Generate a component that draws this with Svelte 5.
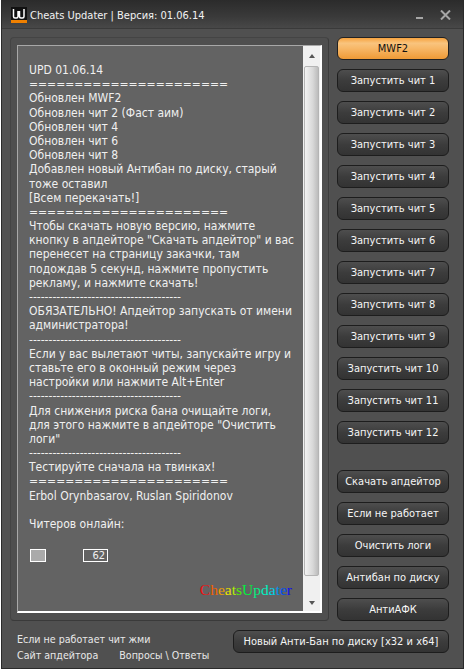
<script lang="ts">
  const eq = "======================";
  const dash = "---------------------------------------";
  const lines = [
    "UPD 01.06.14",
    eq,
    "Обновлен MWF2",
    "Обновлен чит 2 (Фаст аим)",
    "Обновлен чит 4",
    "Обновлен чит 6",
    "Обновлен чит 8",
    "Добавлен новый Антибан по диску, старый",
    "тоже оставил",
    "[Всем перекачать!]",
    eq,
    "Чтобы скачать новую версию, нажмите",
    "кнопку в апдейторе \"Скачать апдейтор\" и вас",
    "перенесет на страницу закачки, там",
    "подождав 5 секунд, нажмите пропустить",
    "рекламу, и нажмите скачать!",
    dash,
    "ОБЯЗАТЕЛЬНО! Апдейтор запускать от имени",
    "администратора!",
    dash,
    "Если у вас вылетают читы, запускайте игру и",
    "ставьте его в оконный режим через",
    "настройки или нажмите Alt+Enter",
    dash,
    "Для снижения риска бана очищайте логи,",
    "для этого нажмите в апдейторе \"Очистить",
    "логи\"",
    dash,
    "Тестируйте сначала на твинках!",
    eq,
    "Erbol Orynbasarov, Ruslan Spiridonov",
    "",
    "Читеров онлайн:",
  ];
  const cheats = ["MWF2", ...Array.from({ length: 12 }, (_, i) => `Запустить чит ${i + 1}`)];
  const tools = ["Скачать апдейтор", "Если не работает", "Очистить логи", "Антибан по диску", "АнтиАФК"];
  const brand = [
    ["C", "#f01010"], ["h", "#f06000"], ["e", "#f0a000"], ["a", "#e8e000"], ["t", "#b0f000"], ["s", "#50f000"],
    ["U", "#00f040"], ["p", "#00f080"], ["d", "#00f0c0"], ["a", "#00d0e8"], ["t", "#0090f0"], ["e", "#0050f0"], ["r", "#1010f0"],
  ];
</script>

<div class="window">
  <header class="titlebar">
    <span class="logo"><svg width="16" height="16" viewBox="0 0 16 16"><rect width="16" height="16" fill="#111" /><path d="M2.500 2v7.500q0 1.500 1.500 1.500h1.500q1.500 0 1.500-1.500V4M8.500 4v5.500q0 1.500 1.500 1.500h1.500q1.500 0 1.500-1.500V2" fill="none" stroke="#fff" stroke-width="1.500" /><rect y="13" width="16" height="3" fill="#f08000" /></svg></span>
    <span class="title">Cheats Updater | Версия: 01.06.14</span>
    <span class="min"></span>
    <svg class="close" width="11" height="10" viewBox="0 0 11 10"><path d="M1 .5l9 9M10 .5l-9 9" stroke="#a6a6a6" stroke-width="2" /></svg>
  </header>

  <div class="main">
    <section class="group">
      <div class="memo">
        <div class="text">
          {#each lines as line}
            <div class="line">{line}</div>
          {/each}
          <div class="meter">
            <span class="bar"></span>
            <span class="count">62</span>
          </div>
          <div class="brand">
            {#each brand as [ch, color]}<span style:color={color}>{ch}</span>{/each}
          </div>
        </div>
        <div class="scrollbar">
          <span class="arrow up"></span>
          <span class="thumb"></span>
          <span class="arrow down"></span>
        </div>
      </div>
    </section>

    <aside class="buttons">
      <div class="stack">
        {#each cheats as label, i}
          <button type="button" class="btn" class:active={i === 0}>{label}</button>
        {/each}
      </div>
      <div class="stack">
        {#each tools as label}
          <button type="button" class="btn">{label}</button>
        {/each}
      </div>
    </aside>
  </div>

  <footer class="footer">
    <div class="links">
      <div>Если не работает чит жми</div>
      <div class="row"><span>Сайт апдейтора</span><span>Вопросы \ Ответы</span></div>
    </div>
    <button type="button" class="btn wide">Новый Анти-Бан по диску [x32 и x64]</button>
  </footer>
</div>

<style>
  :global(body) {
    margin: 0;
    background: #fff;
  }
  .window {
    box-sizing: border-box;
    width: 463px;
    height: 669px;
    margin-left: 1px;
    background: #505050;
    border: 1px solid #2a2a2a;
    border-top: 0;
    color: #f0f0f0;
    font: 12px "DejaVu Sans Condensed", "DejaVu Sans", sans-serif;
    font-stretch: condensed;
    display: flex;
    flex-direction: column;
  }
  .titlebar {
    box-sizing: border-box;
    height: 29px;
    flex: none;
    display: flex;
    align-items: center;
    padding: 2px 12px 0 9px;
    background: linear-gradient(#2b2b2b, #3a3a3a 60%, #484848);
    border-bottom: 1px solid #3a3a3a;
  }
  .logo {
    display: flex;
    margin-right: 3px;
  }
  .title {
    flex: 1;
    font-size: 11px;
    color: #f2f2f2;
  }
  .min {
    width: 7px;
    height: 2px;
    background: #a6a6a6;
    margin: 6px 17px 0 0;
  }
  .main {
    display: flex;
    flex: none;
    padding: 8px 14px 0 8px;
    gap: 8px;
    height: 601px;
    box-sizing: border-box;
  }
  .group {
    box-sizing: border-box;
    width: 319px;
    height: 584px;
    padding: 7px 6px;
    border: 1px solid #444;
    border-right-color: #3c3c3c;
    border-bottom-color: #3a3a3a;
    border-radius: 4px;
    background: #4f4f4f;
  }
  .memo {
    box-sizing: border-box;
    height: 100%;
    display: flex;
    background: #636363;
    border: 1px solid;
    border-color: #a8a8a8 #fff #fff #a8a8a8;
    border-width: 1px 2px 2px 1px;
  }
  .text {
    flex: 1;
    padding: 17px 0 0 11px;
    position: relative;
    line-height: 14.2px;
    white-space: nowrap;
    overflow: hidden;
  }
  .line {
    height: 14.2px;
  }
  .meter {
    display: flex;
    align-items: center;
    margin: 18px 0 0 1px;
  }
  .bar {
    box-sizing: border-box;
    width: 16px;
    height: 13px;
    background: #aaa;
    border: 1px solid #fff;
    margin-right: 37px;
  }
  .count {
    box-sizing: border-box;
    width: 25px;
    height: 13px;
    border: 1px solid #fff;
    font-size: 11px;
    line-height: 11px;
    text-align: right;
    padding-right: 2px;
  }
  .brand {
    position: absolute;
    right: 11px;
    bottom: 12px;
    font: 15.5px "Liberation Serif", serif;
  }
  .scrollbar {
    width: 17px;
    flex: none;
    background: #f0f0f0;
    display: flex;
    flex-direction: column;
    align-items: center;
    box-sizing: border-box;
    padding-bottom: 6px;
  }
  .arrow {
    width: 0;
    height: 0;
    border: 3px solid transparent;
    flex: none;
  }
  .arrow.up {
    border-bottom: 4px solid #555;
    border-top: 0;
    margin: 8px 0 8px;
  }
  .arrow.down {
    border-top: 4px solid #555;
    border-bottom: 0;
    margin-top: 25px;
  }
  .thumb {
    flex: 1;
    width: 15px;
    box-sizing: border-box;
    border: 1px solid #b4b4b4;
    border-radius: 2px;
    background: linear-gradient(90deg, #f2f2f2, #d8d8d8 60%, #bcbcbc);
  }
  .buttons {
    display: flex;
    flex-direction: column;
    gap: 26px;
    width: 112px;
  }
  .stack {
    display: flex;
    flex-direction: column;
    gap: 9px;
  }
  .btn {
    box-sizing: border-box;
    width: 112px;
    height: 23px;
    padding: 0;
    border: 1px solid #1d1d1d;
    border-radius: 6px;
    background: linear-gradient(#4e4e4e, #3c3c3c 50%, #333);
    color: #f5f5f5;
    font: inherit;
    font-size: 11px;
    white-space: nowrap;
  }
  .btn.active {
    color: #111;
    border-color: #222;
    background: linear-gradient(#f7a33f, #f9c47e 25%, #f7b767 50%, #ef9a36);
  }
  .footer {
    flex: 1;
    display: flex;
    justify-content: space-between;
    padding: 0 14px 0 15px;
  }
  .links {
    font-size: 10.6px;
    line-height: 16px;
    color: #e8e8e8;
    padding-top: 1px;
    white-space: nowrap;
  }
  .row {
    display: flex;
    gap: 21px;
  }
  .btn.wide {
    width: 216px;
  }
</style>
